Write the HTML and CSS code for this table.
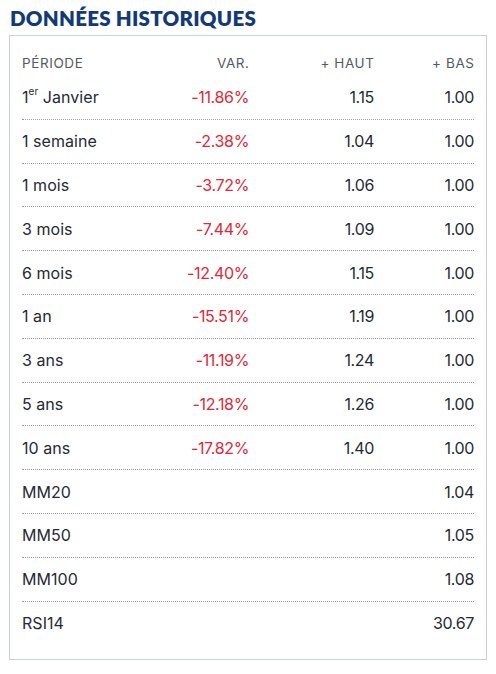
FILE: index.html
```html
<!DOCTYPE html>
<html lang="fr">
<head>
<meta charset="utf-8">
<link rel="stylesheet" href="styles.css">
</head>
<body>
<div class="wrap">
  <h2 class="title">DONNÉES HISTORIQUES</h2>
  <div class="box">
    <div class="row head">
      <span class="c-label">PÉRIODE</span>
      <span class="c-num">VAR.</span>
      <span class="c-num">+ HAUT</span>
      <span class="c-num">+ BAS</span>
    </div>
    <div class="row"><span class="c-label">1<sup>er</sup> Janvier</span><span class="c-num neg">-11.86%</span><span class="c-num">1.15</span><span class="c-num">1.00</span></div>
    <div class="row"><span class="c-label">1 semaine</span><span class="c-num neg">-2.38%</span><span class="c-num">1.04</span><span class="c-num">1.00</span></div>
    <div class="row"><span class="c-label">1 mois</span><span class="c-num neg">-3.72%</span><span class="c-num">1.06</span><span class="c-num">1.00</span></div>
    <div class="row"><span class="c-label">3 mois</span><span class="c-num neg">-7.44%</span><span class="c-num">1.09</span><span class="c-num">1.00</span></div>
    <div class="row"><span class="c-label">6 mois</span><span class="c-num neg">-12.40%</span><span class="c-num">1.15</span><span class="c-num">1.00</span></div>
    <div class="row"><span class="c-label">1 an</span><span class="c-num neg">-15.51%</span><span class="c-num">1.19</span><span class="c-num">1.00</span></div>
    <div class="row"><span class="c-label">3 ans</span><span class="c-num neg">-11.19%</span><span class="c-num">1.24</span><span class="c-num">1.00</span></div>
    <div class="row"><span class="c-label">5 ans</span><span class="c-num neg">-12.18%</span><span class="c-num">1.26</span><span class="c-num">1.00</span></div>
    <div class="row"><span class="c-label">10 ans</span><span class="c-num neg">-17.82%</span><span class="c-num">1.40</span><span class="c-num">1.00</span></div>
    <div class="row"><span class="c-label">MM20</span><span class="c-num"></span><span class="c-num"></span><span class="c-num">1.04</span></div>
    <div class="row"><span class="c-label">MM50</span><span class="c-num"></span><span class="c-num"></span><span class="c-num">1.05</span></div>
    <div class="row"><span class="c-label">MM100</span><span class="c-num"></span><span class="c-num"></span><span class="c-num">1.08</span></div>
    <div class="row last"><span class="c-label">RSI14</span><span class="c-num"></span><span class="c-num"></span><span class="c-num">30.67</span></div>
  </div>
</div>
</body>
</html>
```

FILE: styles.css
```css
* { box-sizing: border-box; }
html, body { margin: 0; padding: 0; background: #fff; }
body {
  font-family: Inter, Lato, Arial, sans-serif;
  color: #252a33;
}
.wrap {
  padding: 7px 9px 0 9px;
  width: 496px;
}
.title {
  margin: 0 0 6px 1px;
  font-family: Lato, Inter, sans-serif;
  font-size: 20.5px;
  line-height: 22px;
  font-weight: 800;
  color: #133a76;
  letter-spacing: 0.25px;
}
.box {
  border: 1px solid #c9d1da;
  width: 478px;
  height: 625px;
  padding: 0 12px;
}
.row {
  display: grid;
  grid-template-columns: 1fr 100px 125px 100px;
  align-items: center;
  height: 43.8px;
  border-bottom: 1px dotted #9aa0a8;
  font-size: 16px;
}
.row .c-num { letter-spacing: -0.35px; }
.row .c-label { letter-spacing: 0.05px; }
.row.head {
  height: 40px;
  border-bottom: none;
  padding-top: 13px;
  font-size: 13.5px;
  color: #555a60;
}
.row.head span { letter-spacing: 0.6px; }
.row.head .c-num { margin-right: -0.6px; }
.row.last { border-bottom: none; }
.c-num { text-align: right; }
.neg { color: #e12837; }
sup {
  font-size: 10px;
  vertical-align: top;
  line-height: 1;
  position: relative;
  top: -1px;
}
```
